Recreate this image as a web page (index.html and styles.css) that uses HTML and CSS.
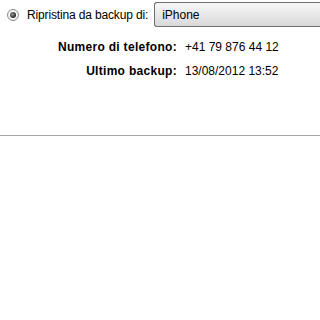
FILE: index.html
```html
<!DOCTYPE html>
<html>
<head>
<meta charset="utf-8">
<link rel="stylesheet" href="styles.css">
</head>
<body>
<div class="top">
  <span class="radio"><span class="dot"></span></span>
  <span class="label">Ripristina da backup di:</span>
  <div class="select">iPhone</div>
</div>
<div class="info">
  <div class="k">Numero di telefono:</div><div class="v">+41 79 876 44 12</div>
  <div class="k">Ultimo backup:</div><div class="v">13/08/2012 13:52</div>
</div>
<div class="rule"></div>
</body>
</html>
```
FILE: styles.css
```css
html, body { margin: 0; padding: 0; background: #fff; }
body { width: 320px; height: 320px; overflow: hidden; font-family: "Liberation Sans", Arial, sans-serif; font-size: 12px; color: #000; }
.top { display: flex; align-items: center; height: 25px; margin-top: 2px; }
.radio { width: 12px; height: 12px; margin-left: 7px; border-radius: 50%; border: 1px solid #8a8a8a; background: radial-gradient(circle, #fff 40%, #dcdcdc 100%); display: flex; align-items: center; justify-content: center; box-sizing: border-box; }
.dot { width: 6px; height: 6px; border-radius: 50%; background: radial-gradient(circle at 40% 40%, #999, #222 70%); }
.label { margin-left: 8px; letter-spacing: -0.15px; }
.select { margin-left: 6px; flex: 1; height: 25px; box-sizing: border-box; border: 1px solid #707070; border-right: none; border-radius: 3px 0 0 3px; background: linear-gradient(#f7f7f7, #d9d9d9); padding-left: 7px; display: flex; align-items: center; }
.info { display: grid; grid-template-columns: 177px auto; column-gap: 8px; row-gap: 9px; margin-top: 13px; line-height: 15px; }
.k { text-align: right; font-weight: bold; letter-spacing: 0.3px; }
.rule { margin-top: 56px; height: 1px; background: #a8a8a8; }
```
